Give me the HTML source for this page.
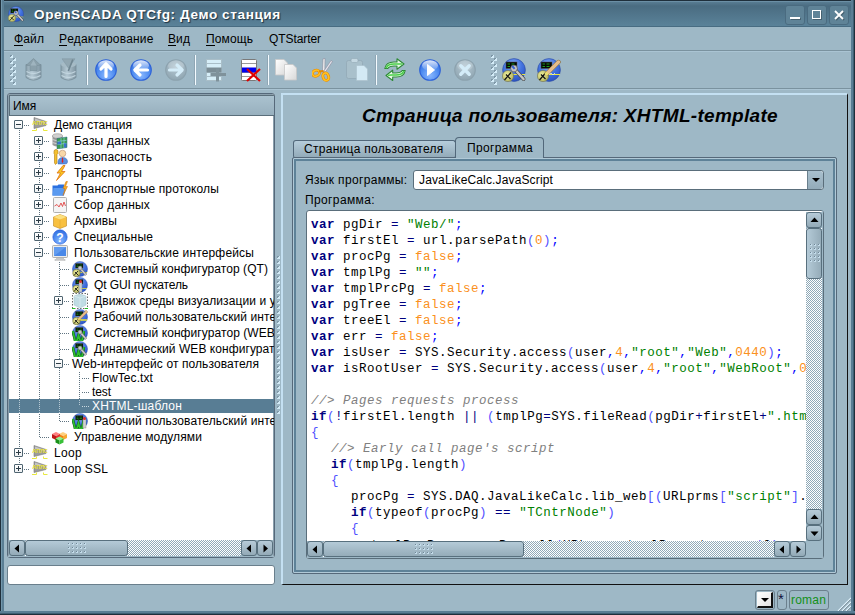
<!DOCTYPE html>
<html><head><meta charset="utf-8">
<style>
*{box-sizing:border-box;margin:0;padding:0}
html,body{width:855px;height:615px;overflow:hidden;background:#9eb8c6;font-family:"Liberation Sans",sans-serif;font-size:12px;color:#000}
.a{position:absolute}
.t{position:absolute;white-space:pre;line-height:14px}
/* frame */
#title{left:0;top:0;width:855px;height:27px;background:linear-gradient(#1f2f3b 0 1px,#6b8fa5 1px 2px,#587c92 2px,#4a6c81 6px,#5a8299 26px,#486c82 26px)}
#lf{left:0;top:0;width:4px;height:615px;background:linear-gradient(90deg,#1f2f3b 0 1px,#7398ad 1px 2px,#5a7e94 2px 4px)}
#rf{left:851px;top:0;width:4px;height:615px;background:linear-gradient(90deg,#5a7e94 0 2px,#3f5f73 2px 3px,#1f2f3b 3px 4px)}
#bf{left:0;top:611px;width:855px;height:4px;background:linear-gradient(#5a7e94 0 2px,#3f5f73 2px 3px,#1f2f3b 3px 4px)}
.wb{position:absolute;top:5px;width:20px;height:20px;border-radius:3px;background:#5f8397;border:1px solid #4a6b80}
#ttext{left:34px;top:6px;font-size:13.6px;font-weight:bold;letter-spacing:.58px;color:#fff;text-shadow:1px 1px 1px #1d3040;line-height:18px}
/* menu */
.mi{position:absolute;top:32px;line-height:14px}
.mi u{text-decoration:none;border-bottom:1px solid #000;display:inline-block;line-height:12px}
#msep{left:4px;top:50px;width:847px;height:2px;background:linear-gradient(#7a929f 50%,#aac4d3 50%)}
#tsep{left:4px;top:88px;width:847px;height:2px;background:linear-gradient(#7a929f 50%,#aac4d3 50%)}
.vsep{position:absolute;top:55px;width:2px;height:30px;background:linear-gradient(90deg,#7f97a5 50%,#e6f2fa 50%)}
.grip{position:absolute;width:6px;}
.ic{position:absolute;top:58px;width:24px;height:24px}
/* tree panel */
#tree{left:7px;top:93px;width:268px;height:465px;border:1px solid #56697a;border-radius:3px;background:#fff;overflow:hidden;box-shadow:inset 0 0 0 1px #8a9fac}
#thead{left:1px;top:1px;width:266px;height:21px;background:linear-gradient(#aac2cf,#98b0be);border:1px solid #5a6e7a;border-right:none}
.row{position:absolute;left:0;width:266px;white-space:pre}
.ex{position:absolute;width:9px;height:9px;border:1px solid #4f6470;border-radius:1px;background:linear-gradient(#fff,#eef0f2)}
.ex:before{content:"";position:absolute;left:1px;top:3px;width:5px;height:1px;background:#2c3c46}
.ex.p:after{content:"";position:absolute;left:3px;top:1px;width:1px;height:5px;background:#2c3c46}
.vl{position:absolute;width:1px;background-image:linear-gradient(#5f7380 50%,transparent 50%);background-size:1px 2px}
.hl{position:absolute;height:1px;background-image:linear-gradient(90deg,#5f7380 50%,transparent 50%);background-size:2px 1px}
.ti{position:absolute;width:16px;height:16px}
.hs{background-image:linear-gradient(90deg,#c8d8e0 50%,transparent 50%)}
/* scrollbars */
.sbtn{position:absolute;width:16px;height:16px;border:1px solid #58707e;border-radius:3px;background:linear-gradient(#b6cbd8,#93aab7)}
.trough{position:absolute;background:conic-gradient(#fff 25%,#8fa9b8 0 50%,#fff 0 75%,#8fa9b8 0) 0 0/2px 2px}
.slider{position:absolute;border:1px solid #58707e;border-radius:3px}
/* right panel */
#rp{left:281px;top:93px;width:567px;height:492px;border-top:2px solid #c4e0f2;border-left:2px solid #c4e0f2;border-right:1px solid #111;border-bottom:1px solid #111}
#pane{left:292px;top:157px;width:545px;height:417px;border:1px solid #56697a;border-radius:2px;box-shadow:inset 0 0 0 1px #b0c9d7,inset 0 0 0 3px #5e8298}
.tab{position:absolute;border:1px solid #52687a;border-bottom:none;border-radius:4px 4px 0 0}
#code{left:306px;top:210px;width:518px;height:349px;border:1px solid #5a6e7b;border-radius:3px;background:#fff;overflow:hidden}
.cl{position:absolute;left:4px;white-space:pre;font-family:"Liberation Mono",monospace;font-size:12.5px;letter-spacing:0.5px;line-height:16px;color:#000}
.k{color:#000080;font-weight:bold}
.o{color:#000080}
.s{color:#008000}
.n{color:#fb9020}
.c{color:#808080;font-style:italic}
.p{color:#5050ff}
.sy{color:#0000ff}
</style></head><body>
<!-- title -->
<div id="title" class="a"></div>
<div id="lf" class="a"></div>
<div id="rf" class="a"></div>
<div id="bf" class="a"></div>
<svg class="a" style="left:8px;top:6px" width="16" height="16" viewBox="0 0 24 24"><circle cx="12" cy="12" r="11.4" fill="url(#gball)" stroke="#2a48a0" stroke-width=".6"/><rect x="4" y="4" width="11" height="6.5" fill="#050805" stroke="#555" stroke-width=".5"/><path d="M5.5 6H8M5.5 8.5H8M9.5 6H12.5M9.5 8.5H12.5" stroke="#1c9a1c" stroke-width="1.2"/><path d="M5 16.5H23" stroke="#e8e840" stroke-width="1"/><circle cx="6" cy="18" r="5.6" fill="url(#gclock)" stroke="#707050" stroke-width=".6"/><path d="M2.5 22L9 14.5M4 16.5L8.5 21" stroke="#111" stroke-width="1.2"/><path d="M12.5 11L21.5 21" stroke="#444" stroke-width="3.8" stroke-linecap="round"/><path d="M12.5 11L21.5 21" stroke="#c4c4c4" stroke-width="2.6" stroke-linecap="round"/><circle cx="12" cy="10.5" r="3.4" fill="#c4c4c4" stroke="#444" stroke-width=".6"/><path d="M10.2 8L12.6 10.8" stroke="#3a62d0" stroke-width="2"/></svg>
<div id="ttext" class="t">OpenSCADA QTCfg: Демо станция</div>
<div class="wb" style="left:785px"><div class="a" style="left:4px;top:11px;width:10px;height:2px;background:#fff;box-shadow:1px 1px 0 rgba(0,0,0,.25)"></div></div>
<div class="wb" style="left:807px"><div class="a" style="left:4px;top:4px;width:9px;height:9px;border:1.5px solid #fff;box-shadow:1px 1px 0 rgba(0,0,0,.25)"></div></div>
<div class="wb" style="left:829px"><svg class="a" style="left:4px;top:4px" width="11" height="11"><path d="M2 2L10 10M10 2L2 10" stroke="rgba(0,0,0,.25)" stroke-width="2"/><path d="M1 1L9 9M9 1L1 9" stroke="#fff" stroke-width="1.8"/></svg></div>

<!-- menu -->
<div class="mi" style="left:14px;letter-spacing:0.125px"><u>Ф</u>айл</div>
<div class="mi" style="left:59px;letter-spacing:0.185px"><u>Р</u>едактирование</div>
<div class="mi" style="left:168px;letter-spacing:0.097px"><u>В</u>ид</div>
<div class="mi" style="left:206px;letter-spacing:0.109px"><u>П</u>омощь</div>
<div class="mi" style="left:269px;letter-spacing:-0.075px">QTStarter</div>
<div id="msep" class="a"></div>
<div id="tsep" class="a"></div>

<!-- toolbar -->
<svg width="0" height="0" style="position:absolute"><defs>
<radialGradient id="gblue" cx="50%" cy="75%" r="70%"><stop offset="0" stop-color="#8ab8ff"/><stop offset=".6" stop-color="#4e8cf0"/><stop offset="1" stop-color="#3570e0"/></radialGradient>
<linearGradient id="gshine" x1="0" y1="0" x2="0" y2="1"><stop offset="0" stop-color="#fff" stop-opacity=".85"/><stop offset="1" stop-color="#fff" stop-opacity=".05"/></linearGradient>
<radialGradient id="ggrey" cx="50%" cy="35%" r="65%"><stop offset="0" stop-color="#b6c9d4"/><stop offset="1" stop-color="#8fa5b1"/></radialGradient>
<linearGradient id="gdb" x1="0" y1="0" x2="1" y2="0"><stop offset="0" stop-color="#8aa0ac"/><stop offset=".4" stop-color="#b4c8d3"/><stop offset="1" stop-color="#7e94a1"/></linearGradient>
<linearGradient id="gpage" x1="0" y1="0" x2="1" y2="1"><stop offset="0" stop-color="#ffffff"/><stop offset="1" stop-color="#d8d8d8"/></linearGradient>
<radialGradient id="gclock" cx="40%" cy="40%" r="60%"><stop offset="0" stop-color="#f0f0a0"/><stop offset="1" stop-color="#b8b860"/></radialGradient>
<linearGradient id="ggreen" x1="0" y1="0" x2="0" y2="1"><stop offset="0" stop-color="#b8f0a8"/><stop offset="1" stop-color="#3ab040"/></linearGradient>
<radialGradient id="gball" cx="45%" cy="30%" r="70%"><stop offset="0" stop-color="#90b4f8"/><stop offset=".55" stop-color="#4474e0"/><stop offset="1" stop-color="#2c54c4"/></radialGradient>
</defs></svg>
<div class="a" style="left:10px;top:55px;width:3px;height:3px;background:linear-gradient(135deg,#7d96a6 45%,#d4ecf8 45%)"></div><div class="a" style="left:13px;top:58px;width:3px;height:3px;background:linear-gradient(135deg,#7d96a6 45%,#d4ecf8 45%)"></div><div class="a" style="left:10px;top:61px;width:3px;height:3px;background:linear-gradient(135deg,#7d96a6 45%,#d4ecf8 45%)"></div><div class="a" style="left:13px;top:64px;width:3px;height:3px;background:linear-gradient(135deg,#7d96a6 45%,#d4ecf8 45%)"></div><div class="a" style="left:10px;top:67px;width:3px;height:3px;background:linear-gradient(135deg,#7d96a6 45%,#d4ecf8 45%)"></div><div class="a" style="left:13px;top:70px;width:3px;height:3px;background:linear-gradient(135deg,#7d96a6 45%,#d4ecf8 45%)"></div><div class="a" style="left:10px;top:73px;width:3px;height:3px;background:linear-gradient(135deg,#7d96a6 45%,#d4ecf8 45%)"></div><div class="a" style="left:13px;top:76px;width:3px;height:3px;background:linear-gradient(135deg,#7d96a6 45%,#d4ecf8 45%)"></div><div class="a" style="left:10px;top:79px;width:3px;height:3px;background:linear-gradient(135deg,#7d96a6 45%,#d4ecf8 45%)"></div><div class="a" style="left:13px;top:82px;width:3px;height:3px;background:linear-gradient(135deg,#7d96a6 45%,#d4ecf8 45%)"></div>
<svg class="a" style="left:25px;top:58px" width="17" height="25" viewBox="0 0 17 25"><path d="M1 6.5V19.5Q8.5 24.8 16 19.5V6.5Z" fill="url(#gdb)" stroke="#79909c" stroke-width=".9"/><path d="M1.5 13.5Q8.5 17.5 15.5 13.5M1.5 17.5Q8.5 21.5 15.5 17.5" stroke="#c2d5df" stroke-width="1.4" fill="none"/><path d="M8.5 0.5L16 7.5H12V12.5H5V7.5H1Z" fill="#8aa0ab" stroke="#7b929e" stroke-width=".7"/><path d="M8.5 2L5.5 7.5H11.5Z" fill="#9fb4bf"/></svg>
<svg class="a" style="left:60px;top:58px" width="17" height="25" viewBox="0 0 17 25"><path d="M1 6.5V19.5Q8.5 24.8 16 19.5V6.5Z" fill="url(#gdb)" stroke="#79909c" stroke-width=".9"/><path d="M1.5 13.5Q8.5 17.5 15.5 13.5M1.5 17.5Q8.5 21.5 15.5 17.5" stroke="#c2d5df" stroke-width="1.4" fill="none"/><ellipse cx="8.5" cy="6.5" rx="7.5" ry="3" fill="#a6bbc6"/><path d="M2 0.8H15L8.5 10Z" fill="#91a7b2" stroke="#8299a5" stroke-width=".6"/><path d="M12.8 1.5L8.3 13" stroke="#6f8692" stroke-width="1.6"/></svg>
<div class="a" style="left:87px;top:55px;width:1px;height:30px;background:#f4fbff"></div><div class="a" style="left:86px;top:55px;width:1px;height:30px;background:#8fa6b4"></div>
<svg class="a" style="left:95px;top:59px" width="22" height="22" viewBox="0 0 22 22"><circle cx="11" cy="11" r="10.3" fill="url(#gblue)" stroke="#2d62d8" stroke-width="1.1"/><ellipse cx="11" cy="6.5" rx="8" ry="5.2" fill="url(#gshine)"/><path d="M11 17.5V5M6 10L11 4.8L16 10" stroke="#fff" stroke-width="3.2" stroke-linecap="round" stroke-linejoin="round" fill="none"/></svg>
<svg class="a" style="left:130px;top:59px" width="22" height="22" viewBox="0 0 22 22"><circle cx="11" cy="11" r="10.3" fill="url(#gblue)" stroke="#2d62d8" stroke-width="1.1"/><ellipse cx="11" cy="6.5" rx="8" ry="5.2" fill="url(#gshine)"/><path d="M17.5 11H5M10 6L4.8 11L10 16" stroke="#fff" stroke-width="3.2" stroke-linecap="round" stroke-linejoin="round" fill="none"/></svg>
<svg class="a" style="left:165px;top:59px" width="22" height="22" viewBox="0 0 22 22"><circle cx="11" cy="11" r="10.3" fill="url(#ggrey)" stroke="#8ca2ae" stroke-width="1.1"/><ellipse cx="11" cy="6.5" rx="8" ry="5.2" fill="#fff" fill-opacity=".18"/><path d="M4.5 11H17M12 6L17.2 11L12 16" stroke="#d4ecf8" stroke-width="3.2" stroke-linecap="round" stroke-linejoin="round" fill="none"/></svg>
<div class="a" style="left:195px;top:55px;width:1px;height:30px;background:#f4fbff"></div><div class="a" style="left:194px;top:55px;width:1px;height:30px;background:#8fa6b4"></div>
<svg class="a" style="left:206px;top:59px" width="22" height="23" viewBox="0 0 22 23"><rect x="0.5" y="0.5" width="15" height="21" fill="#d6eef8" stroke="#a9bec8" stroke-width="1"/><path d="M1 4.5H15M1 13.5H15M1 17.5H15" stroke="#a9bec8" stroke-width="1"/><rect x="0.5" y="8.5" width="15" height="5" fill="#7b8d96"/><path d="M11.5 9.5V22.5M4.5 15.5H20" stroke="#7f929b" stroke-width="3"/></svg>
<svg class="a" style="left:241px;top:59px" width="20" height="23" viewBox="0 0 20 23"><rect x="0.5" y="0.5" width="15" height="21" rx="1" fill="#fff" stroke="#7a7a7a" stroke-width="1"/><path d="M1 4.5H15M1 13.5H15M1 17.5H15" stroke="#9a9a9a" stroke-width="1"/><rect x="1" y="8.5" width="14" height="5" fill="#0000f0"/><path d="M6 10L19 22M19 10L6 22" stroke="#e00000" stroke-width="2.2"/></svg>
<div class="a" style="left:268px;top:55px;width:1px;height:30px;background:#f4fbff"></div><div class="a" style="left:267px;top:55px;width:1px;height:30px;background:#8fa6b4"></div>
<svg class="a" style="left:275px;top:59px" width="23" height="22" viewBox="0 0 23 22"><path d="M0.5 0.5H9L12.5 4V16H0.5Z" fill="url(#gpage)" stroke="#c8c8c8" stroke-width=".8"/><path d="M9.5 5.5H18L21.5 9V21H9.5Z" fill="url(#gpage)" stroke="#c8c8c8" stroke-width=".8"/></svg>
<svg class="a" style="left:312px;top:58px" width="22" height="24" viewBox="0 0 22 24"><path d="M10.5 13L11 0.8L13 0.5L12.8 13Z" fill="#f0f0f0" stroke="#8a8a9a" stroke-width=".6"/><path d="M11.5 13.5L19 2.5L20.5 3.5L13.5 14Z" fill="#e4e4ec" stroke="#8a8a9a" stroke-width=".6"/><ellipse cx="4" cy="15.2" rx="3.6" ry="2.9" transform="rotate(-25 4 15.2)" fill="none" stroke="#e88a00" stroke-width="2.8"/><ellipse cx="4" cy="15.2" rx="3.6" ry="2.9" transform="rotate(-25 4 15.2)" fill="none" stroke="#ffc020" stroke-width="1.6"/><ellipse cx="13.8" cy="18.7" rx="2.8" ry="3.8" transform="rotate(-20 13.8 18.7)" fill="none" stroke="#e88a00" stroke-width="2.8"/><ellipse cx="13.8" cy="18.7" rx="2.8" ry="3.8" transform="rotate(-20 13.8 18.7)" fill="none" stroke="#ffc020" stroke-width="1.6"/><path d="M7 13.5L11.5 13" stroke="#e88a00" stroke-width="2"/></svg>
<svg class="a" style="left:346px;top:58px" width="23" height="24" viewBox="0 0 23 24"><rect x="0.5" y="2.5" width="16" height="18" rx="2" fill="#a9c0cb" stroke="#93aab6" stroke-width=".8"/><rect x="5" y="0.5" width="7" height="4" rx="1.5" fill="#c4d8e2" stroke="#93aab6" stroke-width=".6"/><path d="M10.5 7.5H18L21.5 11V22.5H10.5Z" fill="#d3e9f4" stroke="#a9c0cb" stroke-width=".6"/></svg>
<div class="a" style="left:376px;top:55px;width:1px;height:30px;background:#f4fbff"></div><div class="a" style="left:375px;top:55px;width:1px;height:30px;background:#8fa6b4"></div>
<svg class="a" style="left:384px;top:58px" width="22" height="24" viewBox="0 0 22 24"><path d="M0.8 10.5C1.5 6 5 4 10 4H13V0.8L20 6L13 11.2V8H10C6.5 8 4.8 9 3.8 10.5Z" fill="#e8fae8" stroke="#2d8a35" stroke-width="1.1" stroke-linejoin="round"/><path d="M2.5 9.5C3.5 7 6 6 10 6H14.5L17.5 6" stroke="#48d048" stroke-width="1.6" fill="none" stroke-linecap="round"/><path d="M21.2 12.5C20.5 17 17 19 12 19H8.7V22.5L2 17.5L8.7 12.2V15H12C15.5 15 17.2 14 18.2 12.5Z" fill="#e8fae8" stroke="#2d8a35" stroke-width="1.1" stroke-linejoin="round"/><path d="M19.5 13.5C18.5 16 16 17 12 17H7.5L4.5 17.2" stroke="#48d048" stroke-width="1.6" fill="none" stroke-linecap="round"/></svg>
<svg class="a" style="left:419px;top:59px" width="22" height="22" viewBox="0 0 22 22"><circle cx="11" cy="11" r="10.3" fill="url(#gblue)" stroke="#2d62d8" stroke-width="1.1"/><ellipse cx="11" cy="6.5" rx="8" ry="5.2" fill="url(#gshine)"/><path d="M8.5 5.5V16.5L15.5 11Z" fill="#fff" stroke="#fff" stroke-width="1" stroke-linejoin="round"/></svg>
<svg class="a" style="left:454px;top:59px" width="22" height="22" viewBox="0 0 22 22"><circle cx="11" cy="11" r="10.3" fill="url(#ggrey)" stroke="#8ca2ae" stroke-width="1.1"/><ellipse cx="11" cy="6.5" rx="8" ry="5.2" fill="#fff" fill-opacity=".18"/><path d="M6.8 6.8L15.2 15.2M15.2 6.8L6.8 15.2" stroke="#d4ecf8" stroke-width="3.4" stroke-linecap="round"/></svg>
<div class="a" style="left:491px;top:55px;width:3px;height:3px;background:linear-gradient(135deg,#7d96a6 45%,#d4ecf8 45%)"></div><div class="a" style="left:494px;top:58px;width:3px;height:3px;background:linear-gradient(135deg,#7d96a6 45%,#d4ecf8 45%)"></div><div class="a" style="left:491px;top:61px;width:3px;height:3px;background:linear-gradient(135deg,#7d96a6 45%,#d4ecf8 45%)"></div><div class="a" style="left:494px;top:64px;width:3px;height:3px;background:linear-gradient(135deg,#7d96a6 45%,#d4ecf8 45%)"></div><div class="a" style="left:491px;top:67px;width:3px;height:3px;background:linear-gradient(135deg,#7d96a6 45%,#d4ecf8 45%)"></div><div class="a" style="left:494px;top:70px;width:3px;height:3px;background:linear-gradient(135deg,#7d96a6 45%,#d4ecf8 45%)"></div><div class="a" style="left:491px;top:73px;width:3px;height:3px;background:linear-gradient(135deg,#7d96a6 45%,#d4ecf8 45%)"></div><div class="a" style="left:494px;top:76px;width:3px;height:3px;background:linear-gradient(135deg,#7d96a6 45%,#d4ecf8 45%)"></div><div class="a" style="left:491px;top:79px;width:3px;height:3px;background:linear-gradient(135deg,#7d96a6 45%,#d4ecf8 45%)"></div><div class="a" style="left:494px;top:82px;width:3px;height:3px;background:linear-gradient(135deg,#7d96a6 45%,#d4ecf8 45%)"></div>
<svg class="a" style="left:502px;top:58px" width="24" height="24" viewBox="0 0 24 24"><circle cx="12" cy="12" r="11.4" fill="url(#gball)" stroke="#2a48a0" stroke-width=".6"/><rect x="4" y="4" width="11" height="6.5" fill="#050805" stroke="#555" stroke-width=".5"/><path d="M5.5 6H8M5.5 8.5H8M9.5 6H12.5M9.5 8.5H12.5" stroke="#1c9a1c" stroke-width="1.2"/><path d="M5 16.5H23" stroke="#e8e840" stroke-width="1"/><circle cx="6" cy="18" r="5.6" fill="url(#gclock)" stroke="#707050" stroke-width=".6"/><path d="M2.5 22L9 14.5M4 16.5L8.5 21" stroke="#111" stroke-width="1.2"/><path d="M12.5 11L21.5 21" stroke="#444" stroke-width="3.8" stroke-linecap="round"/><path d="M12.5 11L21.5 21" stroke="#c4c4c4" stroke-width="2.6" stroke-linecap="round"/><circle cx="12" cy="10.5" r="3.4" fill="#c4c4c4" stroke="#444" stroke-width=".6"/><path d="M10.2 8L12.6 10.8" stroke="#3a62d0" stroke-width="2"/></svg>
<svg class="a" style="left:537px;top:58px" width="24" height="24" viewBox="0 0 24 24"><circle cx="12" cy="12" r="11.4" fill="url(#gball)" stroke="#2a48a0" stroke-width=".6"/><rect x="4" y="4" width="11" height="6.5" fill="#050805" stroke="#555" stroke-width=".5"/><path d="M5.5 6H8M5.5 8.5H8M9.5 6H12.5M9.5 8.5H12.5" stroke="#1c9a1c" stroke-width="1.2"/><path d="M5 16.5H23" stroke="#e8e840" stroke-width="1"/><circle cx="6" cy="18" r="5.6" fill="url(#gclock)" stroke="#707050" stroke-width=".6"/><path d="M2.5 22L9 14.5M4 16.5L8.5 21" stroke="#111" stroke-width="1.2"/><path d="M10 15.5L21.5 4" stroke="#8a6a3a" stroke-width="4.4" stroke-linecap="round"/><path d="M10 15.5L21.5 4" stroke="#e4bc8c" stroke-width="3.4" stroke-linecap="round"/><path d="M8.5 17L10.5 14.5" stroke="#e8e070" stroke-width="3"/><path d="M12 16.5L14 15L16 17L18 15" stroke="#e0e8f0" stroke-width=".8" fill="none"/></svg>

<!-- tree -->
<div id="tree" class="a">
 <div id="thead" class="a"><div class="t" style="left:3px;top:3px;letter-spacing:-0.124px">Имя</div></div>
 <div class="a" style="left:1px;top:305px;width:300px;height:14px;background:#587d94"></div>
<div class="vl" style="left:11px;top:32px;height:343px"></div>
<div class="vl" style="left:31px;top:48px;height:295px"></div>
<div class="vl" style="left:51px;top:168px;height:159px"></div>
<div class="vl" style="left:71px;top:278px;height:34px"></div>
<div class="vl" style="left:11px;top:306px;height:13px;background-image:linear-gradient(#b8cad4 50%,transparent 50%)"></div>
<div class="vl" style="left:31px;top:306px;height:13px;background-image:linear-gradient(#b8cad4 50%,transparent 50%)"></div>
<div class="vl" style="left:51px;top:306px;height:13px;background-image:linear-gradient(#b8cad4 50%,transparent 50%)"></div>
<div class="vl" style="left:71px;top:306px;height:6px;background-image:linear-gradient(#b8cad4 50%,transparent 50%)"></div>
<div class="hl" style="left:16px;top:31px;width:6px"></div>
<div class="ex " style="left:6px;top:26px"></div>
<svg class="ti" style="left:24px;top:23px" viewBox="0 0 16 16"><path d="M2 0.5L14 4.5V8.5L2 11.5Z" fill="#9c9c9c" stroke="#7a7a7a" stroke-width=".6"/><path d="M3 1.5L13 5V6L3 4Z" fill="#c4c4c4"/><text x="8" y="8.3" font-size="5.5" font-weight="bold" text-anchor="middle" fill="#e8e030" font-family="Liberation Sans">АПЛС</text><path d="M0 13.5H4.5V11.5M11.5 11.5V13.5H15.5" stroke="#e8e840" stroke-width="1" fill="none"/></svg>
<div class="t" style="left:46px;top:24px;color:#000;letter-spacing:0.017px">Демо станция</div>
<div class="hl" style="left:36px;top:47px;width:6px"></div>
<div class="ex p" style="left:26px;top:42px"></div>
<svg class="ti" style="left:44px;top:39px" viewBox="0 0 16 16"><path d="M0.5 3V12Q5.5 15 10.5 12V3Z" fill="#9a9a9a"/><ellipse cx="5.5" cy="3" rx="5" ry="2.3" fill="#d0d0d0" stroke="#808080" stroke-width=".5"/><path d="M0.5 6.5Q5.5 9.5 10.5 6.5M0.5 9.5Q5.5 12.5 10.5 9.5" stroke="#e0e0e0" stroke-width=".8" fill="none"/><path d="M5 5.5L15 4V14.5L5 16Z" fill="#3c9c4c" stroke="#2a6a8a" stroke-width=".5"/><path d="M5.5 8.5L14.5 7.3M5.5 11.5L14.5 10.3M9 5V15.5M12 4.5V15" stroke="#8ad0e0" stroke-width=".7"/><path d="M5.5 9L9 8.5V11L5.5 11.5Z" fill="#3a70d0"/><path d="M12 10.5L14.5 10.2V14.3L12 14.6Z" fill="#3a70d0"/></svg>
<div class="t" style="left:66px;top:40px;color:#000;letter-spacing:0.234px">Базы данных</div>
<div class="hl" style="left:36px;top:63px;width:6px"></div>
<div class="ex p" style="left:26px;top:58px"></div>
<svg class="ti" style="left:44px;top:55px" viewBox="0 0 16 16"><path d="M2 2.5Q2 0.5 4 0.5Q6 0.5 6 2.5V4.5L5 5.5V14L3.5 15.5L2.5 14V5.5L2 4.5Z" fill="#f4c030" stroke="#b07810" stroke-width=".6"/><circle cx="10.5" cy="4.5" r="3.3" fill="#f8d8a8" stroke="#b08060" stroke-width=".5"/><path d="M6 15Q5.5 8.5 10.5 8.5Q15.5 8.5 15.5 13Q15.5 15 13 15Z" fill="#5a90e0" stroke="#3060b0" stroke-width=".5"/><path d="M10 8.8H11L11.3 13L10.5 14L9.7 13Z" fill="#e02020"/></svg>
<div class="t" style="left:66px;top:56px;color:#000;letter-spacing:0.121px">Безопасность</div>
<div class="hl" style="left:36px;top:79px;width:6px"></div>
<div class="ex p" style="left:26px;top:74px"></div>
<svg class="ti" style="left:44px;top:71px" viewBox="0 0 16 16"><path d="M11 0.5L5 8H8.5L4.5 15.5L13 6.5H9.5L13 0.5Z" fill="#f8c820" stroke="#e07010" stroke-width=".8"/></svg>
<div class="t" style="left:66px;top:72px;color:#000;letter-spacing:0.167px">Транспорты</div>
<div class="hl" style="left:36px;top:95px;width:6px"></div>
<div class="ex p" style="left:26px;top:90px"></div>
<svg class="ti" style="left:44px;top:87px" viewBox="0 0 16 16"><path d="M0.5 4.5H5.5L6.5 3.5H12V14.5H0.5Z" fill="#2a70e0"/><path d="M1.5 7H14L12 14.5H0.5Z" fill="#5a9af0"/><path d="M14 0.5L11 7.5H13L11 14.5L15.5 5.5H13.5L15.5 0.5Z" fill="#f8b020" stroke="#d07010" stroke-width=".5"/></svg>
<div class="t" style="left:66px;top:88px;color:#000;letter-spacing:0.136px">Транспортные протоколы</div>
<div class="hl" style="left:36px;top:111px;width:6px"></div>
<div class="ex p" style="left:26px;top:106px"></div>
<svg class="ti" style="left:44px;top:103px" viewBox="0 0 16 16"><rect x="1.5" y="0.5" width="13" height="15" rx="1" fill="#f4f4f4" stroke="#b0b0b0"/><path d="M2.5 9L5 7.5L7 10L9 6L10.5 9.5L12 5L13.5 9" stroke="#e04848" fill="none" stroke-width=".9"/></svg>
<div class="t" style="left:66px;top:104px;color:#000;letter-spacing:0.202px">Сбор данных</div>
<div class="hl" style="left:36px;top:127px;width:6px"></div>
<div class="ex p" style="left:26px;top:122px"></div>
<svg class="ti" style="left:44px;top:119px" viewBox="0 0 16 16"><path d="M1.5 4L8 1.5L14.5 4V13L8 15.5L1.5 13Z" fill="#f8c040" stroke="#c08820" stroke-width=".6"/><path d="M1.5 4L8 6.5L14.5 4L8 1.5Z" fill="#fce080"/><path d="M8 6.5V15.5" stroke="#e0a830" stroke-width=".6"/></svg>
<div class="t" style="left:66px;top:120px;color:#000;letter-spacing:0.126px">Архивы</div>
<div class="hl" style="left:36px;top:143px;width:6px"></div>
<div class="ex p" style="left:26px;top:138px"></div>
<svg class="ti" style="left:44px;top:135px" viewBox="0 0 16 16"><circle cx="8" cy="8" r="7.2" fill="url(#gblue)" stroke="#2a60e0" stroke-width=".6"/><text x="8" y="12.8" font-size="12" font-weight="bold" text-anchor="middle" fill="#fff" font-family="Liberation Sans">?</text></svg>
<div class="t" style="left:66px;top:136px;color:#000;letter-spacing:0.157px">Специальные</div>
<div class="hl" style="left:36px;top:159px;width:6px"></div>
<div class="ex " style="left:26px;top:154px"></div>
<svg class="ti" style="left:44px;top:151px" viewBox="0 0 16 16"><rect x="0.5" y="0.5" width="15" height="12" rx="1" fill="#ececec" stroke="#a0a0a0" stroke-width=".8"/><rect x="2" y="2" width="12" height="9" fill="#4a88e8"/><path d="M2 2H14L2 11Z" fill="#7ab0f8" fill-opacity=".5"/><rect x="4" y="13" width="8" height="1.5" fill="#c8c8c8"/><rect x="3" y="14.5" width="10" height="1.5" fill="#e0e0e0" stroke="#a0a0a0" stroke-width=".4"/></svg>
<div class="t" style="left:66px;top:152px;color:#000;letter-spacing:0.158px">Пользовательские интерфейсы</div>
<div class="hl" style="left:52px;top:175px;width:10px"></div>
<svg class="ti" style="left:64px;top:167px" viewBox="0 0 16 16"><circle cx="8" cy="8" r="7.6" fill="url(#gball)" stroke="#3050b0" stroke-width=".4"/><rect x="3.5" y="2.5" width="7.5" height="4.5" fill="#050805" stroke="#505050" stroke-width=".4"/><path d="M4.5 4H6.5M4.5 5.6H6.5M7.5 4H10M7.5 5.6H10" stroke="#1a8a1a" stroke-width=".9"/><path d="M3 11.5H15" stroke="#e0e040" stroke-width=".8"/><circle cx="4.5" cy="12" r="3.8" fill="url(#gclock)" stroke="#606030" stroke-width=".5"/><path d="M2 14.5L6 10M3 11L6.5 14.5" stroke="#111" stroke-width=".9"/><path d="M8 7L14 14" stroke="#555" stroke-width="2.6"/><path d="M8 7L14 14" stroke="#c8c8c8" stroke-width="1.8"/><circle cx="8" cy="7" r="2" fill="#c8c8c8" stroke="#555" stroke-width=".4"/></svg>
<div class="t" style="left:86px;top:168px;color:#000;letter-spacing:0.066px">Системный конфигуратор (QT)</div>
<div class="hl" style="left:52px;top:191px;width:10px"></div>
<svg class="ti" style="left:64px;top:183px" viewBox="0 0 16 16"><circle cx="8" cy="8" r="7.6" fill="url(#gball)" stroke="#3050b0" stroke-width=".4"/><rect x="3.5" y="2.5" width="7.5" height="4.5" fill="#050805" stroke="#505050" stroke-width=".4"/><path d="M4.5 4H6.5M4.5 5.6H6.5M7.5 4H10M7.5 5.6H10" stroke="#1a8a1a" stroke-width=".9"/><path d="M3 11.5H15" stroke="#e0e040" stroke-width=".8"/><circle cx="4.5" cy="12" r="3.8" fill="url(#gclock)" stroke="#606030" stroke-width=".5"/><path d="M2 14.5L6 10M3 11L6.5 14.5" stroke="#111" stroke-width=".9"/><rect x="7" y="5" width="3" height="10" fill="#c8d0d0" stroke="#808080" stroke-width=".4"/><circle cx="8.5" cy="4.5" r="1.5" fill="#e03030"/></svg>
<div class="t" style="left:86px;top:184px;color:#000;letter-spacing:-0.115px">Qt GUI пускатель</div>
<div class="hl" style="left:56px;top:207px;width:6px"></div>
<div class="ex p" style="left:46px;top:202px"></div>
<svg class="ti" style="left:64px;top:199px" viewBox="0 0 16 16"><rect x="0.5" y="0.5" width="15" height="15" fill="none" stroke="#404040" stroke-width=".8" stroke-dasharray="1.5 1.5"/><path d="M0 15.5H3M13 15.5H16" stroke="#20c020" stroke-width="1"/><path d="M2 3L8 1L14 3V12L8 15L2 12Z" fill="#c0dce4" stroke="#a0c0c8" stroke-width=".5"/><path d="M2 3L8 5L14 3M8 5V15" stroke="#e0f0f4" stroke-width=".6" fill="none"/></svg>
<div class="t" style="left:86px;top:200px;color:#000;letter-spacing:0.092px">Движок среды визуализации и управления</div>
<div class="hl" style="left:52px;top:223px;width:10px"></div>
<svg class="ti" style="left:64px;top:215px" viewBox="0 0 16 16"><circle cx="8" cy="8" r="7.6" fill="url(#gball)" stroke="#3050b0" stroke-width=".4"/><rect x="3.5" y="2.5" width="7.5" height="4.5" fill="#050805" stroke="#505050" stroke-width=".4"/><path d="M4.5 4H6.5M4.5 5.6H6.5M7.5 4H10M7.5 5.6H10" stroke="#1a8a1a" stroke-width=".9"/><path d="M3 11.5H15" stroke="#e0e040" stroke-width=".8"/><circle cx="4.5" cy="12" r="3.8" fill="url(#gclock)" stroke="#606030" stroke-width=".5"/><path d="M2 14.5L6 10M3 11L6.5 14.5" stroke="#111" stroke-width=".9"/><path d="M6 11L15 2" stroke="#9a7040" stroke-width="2.6"/><path d="M6 11L15 2" stroke="#e8c090" stroke-width="1.8"/><path d="M6 10.5H15" stroke="#e8e040" stroke-width=".8"/></svg>
<div class="t" style="left:86px;top:216px;color:#000;letter-spacing:0.088px">Рабочий пользовательский интерфейс (QT)</div>
<div class="hl" style="left:52px;top:239px;width:10px"></div>
<svg class="ti" style="left:64px;top:231px" viewBox="0 0 16 16"><circle cx="8" cy="8" r="7.6" fill="url(#gball)" stroke="#3050b0" stroke-width=".4"/><rect x="3.5" y="2.5" width="7.5" height="4.5" fill="#050805" stroke="#505050" stroke-width=".4"/><path d="M4.5 4H6.5M4.5 5.6H6.5M7.5 4H10M7.5 5.6H10" stroke="#1a8a1a" stroke-width=".9"/><path d="M0.8 6L3 15.5H5L6.5 10L8 15.5H10L12 6" stroke="#0c600c" stroke-width="2.6" fill="none"/><path d="M0.8 6L3 15.5H5L6.5 10L8 15.5H10L12 6" stroke="#30c030" stroke-width="1.6" fill="none"/><path d="M8 7L14 14" stroke="#555" stroke-width="2.6"/><path d="M8 7L14 14" stroke="#c8c8c8" stroke-width="1.8"/><circle cx="8" cy="7" r="2" fill="#c8c8c8" stroke="#555" stroke-width=".4"/></svg>
<div class="t" style="left:86px;top:232px;color:#000;letter-spacing:0.075px">Системный конфигуратор (WEB)</div>
<div class="hl" style="left:52px;top:255px;width:10px"></div>
<svg class="ti" style="left:64px;top:247px" viewBox="0 0 16 16"><circle cx="8" cy="8" r="7.6" fill="url(#gball)" stroke="#3050b0" stroke-width=".4"/><rect x="3.5" y="2.5" width="7.5" height="4.5" fill="#050805" stroke="#505050" stroke-width=".4"/><path d="M4.5 4H6.5M4.5 5.6H6.5M7.5 4H10M7.5 5.6H10" stroke="#1a8a1a" stroke-width=".9"/><path d="M0.8 6L3 15.5H5L6.5 10L8 15.5H10L12 6" stroke="#0c600c" stroke-width="2.6" fill="none"/><path d="M0.8 6L3 15.5H5L6.5 10L8 15.5H10L12 6" stroke="#30c030" stroke-width="1.6" fill="none"/><path d="M8 7L14 14" stroke="#555" stroke-width="2.6"/><path d="M8 7L14 14" stroke="#c8c8c8" stroke-width="1.8"/><circle cx="8" cy="7" r="2" fill="#c8c8c8" stroke="#555" stroke-width=".4"/></svg>
<div class="t" style="left:86px;top:248px;color:#000;letter-spacing:0.070px">Динамический WEB конфигуратор</div>
<div class="hl" style="left:56px;top:270px;width:6px"></div>
<div class="ex " style="left:46px;top:265px"></div>
<div class="t" style="left:64px;top:263px;color:#000;letter-spacing:0.093px">Web-интерфейс от пользователя</div>
<div class="hl" style="left:74px;top:284px;width:7px"></div>
<div class="t" style="left:84px;top:277px;color:#000;letter-spacing:0.090px">FlowTec.txt</div>
<div class="hl" style="left:74px;top:298px;width:7px"></div>
<div class="t" style="left:84px;top:291px;color:#000;letter-spacing:-0.085px">test</div>
<div class="hl hs" style="left:74px;top:312px;width:7px"></div>
<div class="t" style="left:84px;top:305px;color:#fff;letter-spacing:0.188px">XHTML-шаблон</div>
<div class="hl" style="left:52px;top:327px;width:10px"></div>
<svg class="ti" style="left:64px;top:319px" viewBox="0 0 16 16"><circle cx="8" cy="8" r="7.6" fill="url(#gball)" stroke="#3050b0" stroke-width=".4"/><rect x="3.5" y="2.5" width="7.5" height="4.5" fill="#050805" stroke="#505050" stroke-width=".4"/><path d="M4.5 4H6.5M4.5 5.6H6.5M7.5 4H10M7.5 5.6H10" stroke="#1a8a1a" stroke-width=".9"/><path d="M0.8 6L3 15.5H5L6.5 10L8 15.5H10L12 6" stroke="#0c600c" stroke-width="2.6" fill="none"/><path d="M0.8 6L3 15.5H5L6.5 10L8 15.5H10L12 6" stroke="#30c030" stroke-width="1.6" fill="none"/><rect x="11" y="6" width="3" height="9" fill="#d0d0d0" stroke="#808080" stroke-width=".4"/><circle cx="12.5" cy="5.5" r="1.5" fill="#e03030"/></svg>
<div class="t" style="left:86px;top:320px;color:#000;letter-spacing:0.094px">Рабочий пользовательский интерфейс (WEB)</div>
<div class="hl" style="left:32px;top:343px;width:10px"></div>
<svg class="ti" style="left:44px;top:335px" viewBox="0 0 16 16"><path d="M7 5L11 3L15 5L11 7Z" fill="#ffd080"/><path d="M7 5V9L11 11V7Z" fill="#f08010"/><path d="M11 7V11L15 9V5Z" fill="#f8a830"/><path d="M0 5L4 3L8 5L4 7Z" fill="#ff8080"/><path d="M0 5V9L4 11V7Z" fill="#c01818"/><path d="M4 7V11L8 9V5Z" fill="#e83030"/><path d="M3.5 9.5L7.5 7.5L11.5 9.5L7.5 11.5Z" fill="#90f090"/><path d="M3.5 9.5V13.5L7.5 15.5V11.5Z" fill="#189018"/><path d="M7.5 11.5V15.5L11.5 13.5V9.5Z" fill="#38c038"/></svg>
<div class="t" style="left:66px;top:336px;color:#000;letter-spacing:0.111px">Управление модулями</div>
<div class="hl" style="left:16px;top:359px;width:6px"></div>
<div class="ex p" style="left:6px;top:354px"></div>
<svg class="ti" style="left:24px;top:351px" viewBox="0 0 16 16"><path d="M2 0.5L14 4.5V8.5L2 11.5Z" fill="#9c9c9c" stroke="#7a7a7a" stroke-width=".6"/><path d="M3 1.5L13 5V6L3 4Z" fill="#c4c4c4"/><text x="8" y="8.3" font-size="5.5" font-weight="bold" text-anchor="middle" fill="#e8e030" font-family="Liberation Sans">АПЛС</text><path d="M0 13.5H4.5V11.5M11.5 11.5V13.5H15.5" stroke="#e8e840" stroke-width="1" fill="none"/></svg>
<div class="t" style="left:46px;top:352px;color:#000;letter-spacing:0.326px">Loop</div>
<div class="hl" style="left:16px;top:375px;width:6px"></div>
<div class="ex p" style="left:6px;top:370px"></div>
<svg class="ti" style="left:24px;top:367px" viewBox="0 0 16 16"><path d="M2 0.5L14 4.5V8.5L2 11.5Z" fill="#9c9c9c" stroke="#7a7a7a" stroke-width=".6"/><path d="M3 1.5L13 5V6L3 4Z" fill="#c4c4c4"/><text x="8" y="8.3" font-size="5.5" font-weight="bold" text-anchor="middle" fill="#e8e030" font-family="Liberation Sans">АПЛС</text><path d="M0 13.5H4.5V11.5M11.5 11.5V13.5H15.5" stroke="#e8e840" stroke-width="1" fill="none"/></svg>
<div class="t" style="left:46px;top:368px;color:#000;letter-spacing:0.161px">Loop SSL</div>
</div>
<div class="a" style="left:7px;top:565px;width:268px;height:20px;border:1px solid #6a7f8c;border-radius:3px;background:#fff"></div>

<!-- right panel -->
<div id="rp" class="a"></div>
<div class="t" style="left:362px;top:105px;font-size:19px;font-weight:bold;font-style:italic;letter-spacing:.3px;line-height:21px">Страница пользователя: XHTML-template</div>
<div id="pane" class="a"></div>
<div class="tab" style="left:293px;top:140px;width:163px;height:18px;border-bottom:1px solid #56697a;border-radius:3px 3px 2px 2px;background:linear-gradient(#b6cddb,#93abb9)"></div>
<div class="t" style="left:304px;top:142px;letter-spacing:.28px">Страница пользователя</div>
<div class="tab" style="left:455px;top:137px;width:89px;height:21px;background:#9eb8c6"></div>
<div class="t" style="left:467px;top:141px;letter-spacing:.35px">Программа</div>
<div class="t" style="left:305px;top:173px;letter-spacing:.34px">Язык программы:</div>
<div class="a" style="left:413px;top:170px;width:411px;height:20px;border:1px solid #5a6e7b;border-radius:3px;background:#fff"></div>
<div class="a" style="left:807px;top:171px;width:16px;height:18px;border-left:1px solid #6a7f8c;border-radius:0 3px 3px 0;background:linear-gradient(#a9c0ce,#93abb9)"><svg class="a" style="left:4px;top:7px" width="8" height="5"><path d="M0 0H8L4 4Z" fill="#000"/></svg></div>
<div class="t" style="left:419px;top:173px;letter-spacing:0.142px">JavaLikeCalc.JavaScript</div>
<div class="t" style="left:305px;top:193px;letter-spacing:.38px">Программа:</div>

<div id="code" class="a"><div class="cl" style="top:6px;left:4px"><span class="k">var</span> pgDir <span class="o">=</span> <span class="s">"Web/"</span><span class="sy">;</span></div>
<div class="cl" style="top:22px;left:4px"><span class="k">var</span> firstEl <span class="o">=</span> url.parsePath<span class="p">(</span><span class="n">0</span><span class="p">)</span><span class="sy">;</span></div>
<div class="cl" style="top:38px;left:4px"><span class="k">var</span> procPg <span class="o">=</span> <span class="n">false</span><span class="sy">;</span></div>
<div class="cl" style="top:54px;left:4px"><span class="k">var</span> tmplPg <span class="o">=</span> <span class="s">""</span><span class="sy">;</span></div>
<div class="cl" style="top:70px;left:4px"><span class="k">var</span> tmplPrcPg <span class="o">=</span> <span class="n">false</span><span class="sy">;</span></div>
<div class="cl" style="top:86px;left:4px"><span class="k">var</span> pgTree <span class="o">=</span> <span class="n">false</span><span class="sy">;</span></div>
<div class="cl" style="top:102px;left:4px"><span class="k">var</span> treeEl <span class="o">=</span> <span class="n">false</span><span class="sy">;</span></div>
<div class="cl" style="top:118px;left:4px"><span class="k">var</span> err <span class="o">=</span> <span class="n">false</span><span class="sy">;</span></div>
<div class="cl" style="top:134px;left:4px"><span class="k">var</span> isUser <span class="o">=</span> SYS.Security.access<span class="p">(</span>user<span class="sy">,</span><span class="n">4</span><span class="sy">,</span><span class="s">"root"</span><span class="sy">,</span><span class="s">"Web"</span><span class="sy">,</span><span class="n">0440</span><span class="p">)</span><span class="sy">;</span></div>
<div class="cl" style="top:150px;left:4px"><span class="k">var</span> isRootUser <span class="o">=</span> SYS.Security.access<span class="p">(</span>user<span class="sy">,</span><span class="n">4</span><span class="sy">,</span><span class="s">"root"</span><span class="sy">,</span><span class="s">"WebRoot"</span><span class="sy">,</span><span class="n">0440</span><span class="p">)</span><span class="sy">;</span></div>
<div class="cl" style="top:166px;left:4px"></div>
<div class="cl" style="top:182px;left:4px"><span class="c">//&gt; Pages requests process</span></div>
<div class="cl" style="top:198px;left:4px"><span class="k">if</span><span class="p">(</span><span class="o">!</span>firstEl.length <span class="o">||</span> <span class="p">(</span>tmplPg<span class="o">=</span>SYS.fileRead<span class="p">(</span>pgDir<span class="o">+</span>firstEl<span class="o">+</span><span class="s">".html"</span><span class="p">))</span>.length<span class="p">)</span></div>
<div class="cl" style="top:214px;left:4px"><span class="p">{</span></div>
<div class="cl" style="top:230px;left:24px"><span class="c">//&gt; Early call page's script</span></div>
<div class="cl" style="top:246px;left:24px"><span class="k">if</span><span class="p">(</span>tmplPg.length<span class="p">)</span></div>
<div class="cl" style="top:262px;left:24px"><span class="p">{</span></div>
<div class="cl" style="top:278px;left:44px">procPg <span class="o">=</span> SYS.DAQ.JavaLikeCalc.lib_web<span class="p">[</span><span class="p">(</span>URLprms<span class="p">[</span><span class="s">"script"</span><span class="p">]</span>.length<span class="p">)</span></div>
<div class="cl" style="top:294px;left:44px"><span class="k">if</span><span class="p">(</span>typeof<span class="p">(</span>procPg<span class="p">)</span> <span class="o">==</span> <span class="s">"TCntrNode"</span><span class="p">)</span></div>
<div class="cl" style="top:310px;left:44px"><span class="p">{</span></div>
<div class="cl" style="top:327px;left:64px">tmplPrcPg <span class="o">=</span> procPg.call<span class="p">(</span>URLprms<span class="sy">,</span>tmplPg<span class="sy">,</span>cnt<span class="sy">,</span>sessn<span class="p">(</span>0<span class="p">)</span></div></div>

<div class="trough" style="left:9px;top:540px;width:264px;height:16px"></div>
<div class="a" style="left:9px;top:540px;width:16px;height:16px;background:#9eb8c6"></div><div class="sbtn" style="left:9px;top:540px;width:16px;height:16px"><svg class="a" style="left:4px;top:3px" width="6" height="9"><path d="M5 0.5V8.5L0.5 4.5Z" fill="#000"/></svg></div>
<div class="slider" style="left:25px;top:540px;width:103px;height:16px;background:linear-gradient(#b4cad7,#95acb9)"></div><div class="a" style="left:68px;top:543px;width:2px;height:2px;background:linear-gradient(135deg,#6f8696 50%,#c4dcea 50%)"></div><div class="a" style="left:68px;top:547px;width:2px;height:2px;background:linear-gradient(135deg,#6f8696 50%,#c4dcea 50%)"></div><div class="a" style="left:68px;top:551px;width:2px;height:2px;background:linear-gradient(135deg,#6f8696 50%,#c4dcea 50%)"></div><div class="a" style="left:72px;top:543px;width:2px;height:2px;background:linear-gradient(135deg,#6f8696 50%,#c4dcea 50%)"></div><div class="a" style="left:72px;top:547px;width:2px;height:2px;background:linear-gradient(135deg,#6f8696 50%,#c4dcea 50%)"></div><div class="a" style="left:72px;top:551px;width:2px;height:2px;background:linear-gradient(135deg,#6f8696 50%,#c4dcea 50%)"></div><div class="a" style="left:76px;top:543px;width:2px;height:2px;background:linear-gradient(135deg,#6f8696 50%,#c4dcea 50%)"></div><div class="a" style="left:76px;top:547px;width:2px;height:2px;background:linear-gradient(135deg,#6f8696 50%,#c4dcea 50%)"></div><div class="a" style="left:76px;top:551px;width:2px;height:2px;background:linear-gradient(135deg,#6f8696 50%,#c4dcea 50%)"></div><div class="a" style="left:80px;top:543px;width:2px;height:2px;background:linear-gradient(135deg,#6f8696 50%,#c4dcea 50%)"></div><div class="a" style="left:80px;top:547px;width:2px;height:2px;background:linear-gradient(135deg,#6f8696 50%,#c4dcea 50%)"></div><div class="a" style="left:80px;top:551px;width:2px;height:2px;background:linear-gradient(135deg,#6f8696 50%,#c4dcea 50%)"></div><div class="a" style="left:84px;top:543px;width:2px;height:2px;background:linear-gradient(135deg,#6f8696 50%,#c4dcea 50%)"></div><div class="a" style="left:84px;top:547px;width:2px;height:2px;background:linear-gradient(135deg,#6f8696 50%,#c4dcea 50%)"></div><div class="a" style="left:84px;top:551px;width:2px;height:2px;background:linear-gradient(135deg,#6f8696 50%,#c4dcea 50%)"></div>
<div class="a" style="left:241px;top:540px;width:16px;height:16px;background:#9eb8c6"></div><div class="sbtn" style="left:241px;top:540px;width:16px;height:16px"><svg class="a" style="left:4px;top:3px" width="6" height="9"><path d="M5 0.5V8.5L0.5 4.5Z" fill="#000"/></svg></div>
<div class="a" style="left:257px;top:540px;width:16px;height:16px;background:#9eb8c6"></div><div class="sbtn" style="left:257px;top:540px;width:16px;height:16px"><svg class="a" style="left:5px;top:3px" width="6" height="9"><path d="M0.5 0.5V8.5L5 4.5Z" fill="#000"/></svg></div>
<div class="trough" style="left:806px;top:212px;width:16px;height:329px"></div>
<div class="a" style="left:806px;top:212px;width:16px;height:16px;background:#9eb8c6"></div><div class="sbtn" style="left:806px;top:212px;width:16px;height:16px"><svg class="a" style="left:3px;top:4px" width="9" height="6"><path d="M0.5 5H8.5L4.5 0.5Z" fill="#000"/></svg></div>
<div class="slider" style="left:806px;top:228px;width:16px;height:51px;background:linear-gradient(90deg,#b4cad7,#95acb9)"></div><div class="a" style="left:810px;top:244px;width:2px;height:2px;background:linear-gradient(135deg,#6f8696 50%,#c4dcea 50%)"></div><div class="a" style="left:810px;top:248px;width:2px;height:2px;background:linear-gradient(135deg,#6f8696 50%,#c4dcea 50%)"></div><div class="a" style="left:810px;top:252px;width:2px;height:2px;background:linear-gradient(135deg,#6f8696 50%,#c4dcea 50%)"></div><div class="a" style="left:810px;top:256px;width:2px;height:2px;background:linear-gradient(135deg,#6f8696 50%,#c4dcea 50%)"></div><div class="a" style="left:810px;top:260px;width:2px;height:2px;background:linear-gradient(135deg,#6f8696 50%,#c4dcea 50%)"></div><div class="a" style="left:814px;top:244px;width:2px;height:2px;background:linear-gradient(135deg,#6f8696 50%,#c4dcea 50%)"></div><div class="a" style="left:814px;top:248px;width:2px;height:2px;background:linear-gradient(135deg,#6f8696 50%,#c4dcea 50%)"></div><div class="a" style="left:814px;top:252px;width:2px;height:2px;background:linear-gradient(135deg,#6f8696 50%,#c4dcea 50%)"></div><div class="a" style="left:814px;top:256px;width:2px;height:2px;background:linear-gradient(135deg,#6f8696 50%,#c4dcea 50%)"></div><div class="a" style="left:814px;top:260px;width:2px;height:2px;background:linear-gradient(135deg,#6f8696 50%,#c4dcea 50%)"></div><div class="a" style="left:818px;top:244px;width:2px;height:2px;background:linear-gradient(135deg,#6f8696 50%,#c4dcea 50%)"></div><div class="a" style="left:818px;top:248px;width:2px;height:2px;background:linear-gradient(135deg,#6f8696 50%,#c4dcea 50%)"></div><div class="a" style="left:818px;top:252px;width:2px;height:2px;background:linear-gradient(135deg,#6f8696 50%,#c4dcea 50%)"></div><div class="a" style="left:818px;top:256px;width:2px;height:2px;background:linear-gradient(135deg,#6f8696 50%,#c4dcea 50%)"></div><div class="a" style="left:818px;top:260px;width:2px;height:2px;background:linear-gradient(135deg,#6f8696 50%,#c4dcea 50%)"></div>
<div class="a" style="left:806px;top:509px;width:16px;height:16px;background:#9eb8c6"></div><div class="sbtn" style="left:806px;top:509px;width:16px;height:16px"><svg class="a" style="left:3px;top:4px" width="9" height="6"><path d="M0.5 5H8.5L4.5 0.5Z" fill="#000"/></svg></div>
<div class="a" style="left:806px;top:525px;width:16px;height:16px;background:#9eb8c6"></div><div class="sbtn" style="left:806px;top:525px;width:16px;height:16px"><svg class="a" style="left:3px;top:5px" width="9" height="6"><path d="M0.5 0.5H8.5L4.5 5Z" fill="#000"/></svg></div>
<div class="trough" style="left:307px;top:541px;width:499px;height:16px"></div>
<div class="a" style="left:307px;top:541px;width:16px;height:16px;background:#9eb8c6"></div><div class="sbtn" style="left:307px;top:541px;width:16px;height:16px"><svg class="a" style="left:4px;top:3px" width="6" height="9"><path d="M5 0.5V8.5L0.5 4.5Z" fill="#000"/></svg></div>
<div class="slider" style="left:323px;top:541px;width:201px;height:16px;background:linear-gradient(#b4cad7,#95acb9)"></div><div class="a" style="left:415px;top:544px;width:2px;height:2px;background:linear-gradient(135deg,#6f8696 50%,#c4dcea 50%)"></div><div class="a" style="left:415px;top:548px;width:2px;height:2px;background:linear-gradient(135deg,#6f8696 50%,#c4dcea 50%)"></div><div class="a" style="left:415px;top:552px;width:2px;height:2px;background:linear-gradient(135deg,#6f8696 50%,#c4dcea 50%)"></div><div class="a" style="left:419px;top:544px;width:2px;height:2px;background:linear-gradient(135deg,#6f8696 50%,#c4dcea 50%)"></div><div class="a" style="left:419px;top:548px;width:2px;height:2px;background:linear-gradient(135deg,#6f8696 50%,#c4dcea 50%)"></div><div class="a" style="left:419px;top:552px;width:2px;height:2px;background:linear-gradient(135deg,#6f8696 50%,#c4dcea 50%)"></div><div class="a" style="left:423px;top:544px;width:2px;height:2px;background:linear-gradient(135deg,#6f8696 50%,#c4dcea 50%)"></div><div class="a" style="left:423px;top:548px;width:2px;height:2px;background:linear-gradient(135deg,#6f8696 50%,#c4dcea 50%)"></div><div class="a" style="left:423px;top:552px;width:2px;height:2px;background:linear-gradient(135deg,#6f8696 50%,#c4dcea 50%)"></div><div class="a" style="left:427px;top:544px;width:2px;height:2px;background:linear-gradient(135deg,#6f8696 50%,#c4dcea 50%)"></div><div class="a" style="left:427px;top:548px;width:2px;height:2px;background:linear-gradient(135deg,#6f8696 50%,#c4dcea 50%)"></div><div class="a" style="left:427px;top:552px;width:2px;height:2px;background:linear-gradient(135deg,#6f8696 50%,#c4dcea 50%)"></div><div class="a" style="left:431px;top:544px;width:2px;height:2px;background:linear-gradient(135deg,#6f8696 50%,#c4dcea 50%)"></div><div class="a" style="left:431px;top:548px;width:2px;height:2px;background:linear-gradient(135deg,#6f8696 50%,#c4dcea 50%)"></div><div class="a" style="left:431px;top:552px;width:2px;height:2px;background:linear-gradient(135deg,#6f8696 50%,#c4dcea 50%)"></div>
<div class="a" style="left:307px;top:557px;width:516px;height:1px;background:#9eb8c6"></div>
<div class="a" style="left:822px;top:211px;width:1px;height:347px;background:#9eb8c6"></div>
<div class="a" style="left:8px;top:556px;width:266px;height:1px;background:#9eb8c6"></div>
<div class="a" style="left:774px;top:541px;width:16px;height:16px;background:#9eb8c6"></div><div class="sbtn" style="left:774px;top:541px;width:16px;height:16px"><svg class="a" style="left:4px;top:3px" width="6" height="9"><path d="M5 0.5V8.5L0.5 4.5Z" fill="#000"/></svg></div>
<div class="a" style="left:790px;top:541px;width:16px;height:16px;background:#9eb8c6"></div><div class="sbtn" style="left:790px;top:541px;width:16px;height:16px"><svg class="a" style="left:5px;top:3px" width="6" height="9"><path d="M0.5 0.5V8.5L5 4.5Z" fill="#000"/></svg></div>
<div class="a" style="left:806px;top:541px;width:17px;height:17px;background:#9eb8c6;border-radius:0 0 3px 0"></div>
<div class="a" style="left:277px;top:256px;width:3px;height:3px;background:linear-gradient(135deg,#8199a8 45%,#d2eaf6 45%)"></div>
<div class="a" style="left:277px;top:261px;width:3px;height:3px;background:linear-gradient(135deg,#8199a8 45%,#d2eaf6 45%)"></div>
<div class="a" style="left:277px;top:266px;width:3px;height:3px;background:linear-gradient(135deg,#8199a8 45%,#d2eaf6 45%)"></div>
<div class="a" style="left:277px;top:271px;width:3px;height:3px;background:linear-gradient(135deg,#8199a8 45%,#d2eaf6 45%)"></div>
<div class="a" style="left:277px;top:276px;width:3px;height:3px;background:linear-gradient(135deg,#8199a8 45%,#d2eaf6 45%)"></div>
<div class="a" style="left:277px;top:281px;width:3px;height:3px;background:linear-gradient(135deg,#8199a8 45%,#d2eaf6 45%)"></div>
<div class="a" style="left:277px;top:286px;width:3px;height:3px;background:linear-gradient(135deg,#8199a8 45%,#d2eaf6 45%)"></div>
<div class="a" style="left:277px;top:291px;width:3px;height:3px;background:linear-gradient(135deg,#8199a8 45%,#d2eaf6 45%)"></div>
<div class="a" style="left:277px;top:296px;width:3px;height:3px;background:linear-gradient(135deg,#8199a8 45%,#d2eaf6 45%)"></div>
<div class="a" style="left:277px;top:301px;width:3px;height:3px;background:linear-gradient(135deg,#8199a8 45%,#d2eaf6 45%)"></div>
<div class="a" style="left:277px;top:306px;width:3px;height:3px;background:linear-gradient(135deg,#8199a8 45%,#d2eaf6 45%)"></div>
<div class="a" style="left:277px;top:311px;width:3px;height:3px;background:linear-gradient(135deg,#8199a8 45%,#d2eaf6 45%)"></div>
<div class="a" style="left:277px;top:316px;width:3px;height:3px;background:linear-gradient(135deg,#8199a8 45%,#d2eaf6 45%)"></div>
<div class="a" style="left:277px;top:321px;width:3px;height:3px;background:linear-gradient(135deg,#8199a8 45%,#d2eaf6 45%)"></div>
<div class="a" style="left:277px;top:326px;width:3px;height:3px;background:linear-gradient(135deg,#8199a8 45%,#d2eaf6 45%)"></div>
<div class="a" style="left:277px;top:331px;width:3px;height:3px;background:linear-gradient(135deg,#8199a8 45%,#d2eaf6 45%)"></div>
<div class="a" style="left:277px;top:336px;width:3px;height:3px;background:linear-gradient(135deg,#8199a8 45%,#d2eaf6 45%)"></div>
<div class="a" style="left:277px;top:341px;width:3px;height:3px;background:linear-gradient(135deg,#8199a8 45%,#d2eaf6 45%)"></div>
<div class="a" style="left:277px;top:346px;width:3px;height:3px;background:linear-gradient(135deg,#8199a8 45%,#d2eaf6 45%)"></div>
<div class="a" style="left:277px;top:351px;width:3px;height:3px;background:linear-gradient(135deg,#8199a8 45%,#d2eaf6 45%)"></div>
<div class="a" style="left:277px;top:356px;width:3px;height:3px;background:linear-gradient(135deg,#8199a8 45%,#d2eaf6 45%)"></div>
<div class="a" style="left:277px;top:361px;width:3px;height:3px;background:linear-gradient(135deg,#8199a8 45%,#d2eaf6 45%)"></div>
<div class="a" style="left:277px;top:366px;width:3px;height:3px;background:linear-gradient(135deg,#8199a8 45%,#d2eaf6 45%)"></div>
<div class="a" style="left:277px;top:371px;width:3px;height:3px;background:linear-gradient(135deg,#8199a8 45%,#d2eaf6 45%)"></div>
<div class="a" style="left:277px;top:376px;width:3px;height:3px;background:linear-gradient(135deg,#8199a8 45%,#d2eaf6 45%)"></div>
<div class="a" style="left:277px;top:381px;width:3px;height:3px;background:linear-gradient(135deg,#8199a8 45%,#d2eaf6 45%)"></div>
<div class="a" style="left:277px;top:386px;width:3px;height:3px;background:linear-gradient(135deg,#8199a8 45%,#d2eaf6 45%)"></div>
<div class="a" style="left:277px;top:391px;width:3px;height:3px;background:linear-gradient(135deg,#8199a8 45%,#d2eaf6 45%)"></div>
<div class="a" style="left:277px;top:396px;width:3px;height:3px;background:linear-gradient(135deg,#8199a8 45%,#d2eaf6 45%)"></div>
<div class="a" style="left:277px;top:401px;width:3px;height:3px;background:linear-gradient(135deg,#8199a8 45%,#d2eaf6 45%)"></div>
<div class="a" style="left:277px;top:406px;width:3px;height:3px;background:linear-gradient(135deg,#8199a8 45%,#d2eaf6 45%)"></div>
<div class="a" style="left:277px;top:411px;width:3px;height:3px;background:linear-gradient(135deg,#8199a8 45%,#d2eaf6 45%)"></div>
<!-- status bar -->
<div class="a" style="left:755px;top:590px;width:20px;height:20px;border:1px solid #6b808d;border-radius:3px"></div>
<div class="a" style="left:757px;top:592px;width:16px;height:16px;background:linear-gradient(135deg,#fff,#e4e4e4);border-right:2px solid #111;border-bottom:2px solid #111;border-top:1px solid #f8f8f8;border-left:1px solid #f8f8f8"><svg class="a" style="left:3px;top:5px" width="8" height="5"><path d="M0 0H8L4 4Z" fill="#000"/></svg></div>
<div class="a" style="left:777px;top:590px;width:10px;height:20px;border:1px solid #6b808d;border-radius:3px"></div>
<div class="t" style="left:778px;top:592px;font-size:15px;color:#10103a">*</div>
<div class="a" style="left:789px;top:590px;width:40px;height:20px;border:1px solid #6b808d;border-radius:3px"></div>
<div class="t" style="left:791px;top:593px;color:#139018;letter-spacing:0.197px">roman</div>
<svg class="a" style="left:837px;top:597px" width="14" height="14"><path d="M1 14L14 1M5 14L14 5M9 14L14 9" stroke="#e0f2fc" stroke-width="1.2"/><path d="M2.2 14L14 2.2M6.2 14L14 6.2M10.2 14L14 10.2" stroke="#7a8c96" stroke-width="1"/></svg>
</body></html>
